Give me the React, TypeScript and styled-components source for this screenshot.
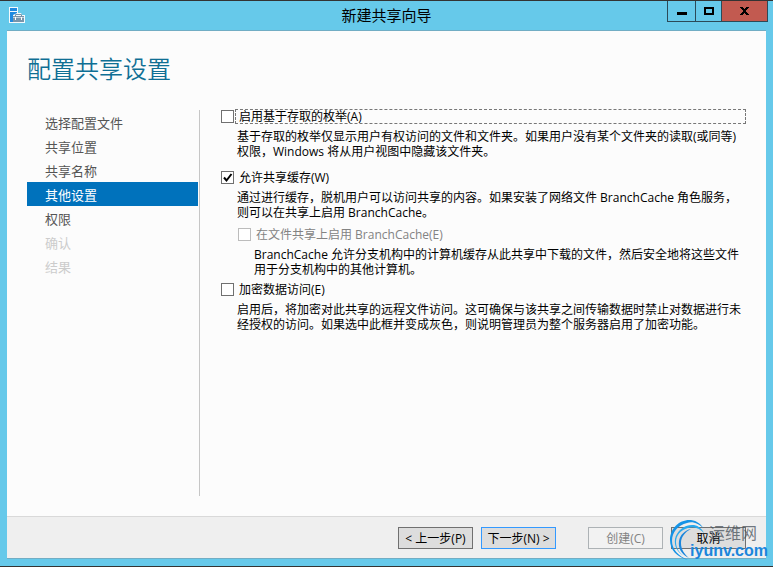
import React from "react";
import styled, { createGlobalStyle, css } from "styled-components";

const GlobalStyle = createGlobalStyle`
  * { box-sizing: border-box; }
  body { margin: 0; }
  body, button, input {
    font-family: "Open Sans", "Noto Sans CJK SC", sans-serif;
    font-size: 12px;
    color: #000;
  }
`;

const Window = styled.div`
  position: relative;
  display: flex;
  flex-direction: column;
  min-height: 100vh;
  padding: 0 7px 7px;
  background: #66c9ea;
  border-top: 1px solid #333;
  border-bottom: 1px solid #333;
`;

const TitleBar = styled.header`
  display: grid;
  grid-template-columns: 1fr auto 1fr;
  height: 29px;
`;

const AppIcon = styled.svg`
  width: 16px;
  height: 16px;
  margin: 6px 2px;
`;

const Title = styled.h1`
  margin: 0;
  font-size: 15px;
  font-weight: 400;
  line-height: 28px;
`;

const Captions = styled.div`
  display: flex;
  justify-content: flex-end;
  align-items: flex-start;
  margin-right: -2px;
`;

const CaptionButton = styled.button<{ $width: number; $close?: boolean }>`
  display: flex;
  align-items: center;
  justify-content: center;
  width: ${(p) => p.$width}px;
  height: 21px;
  padding: 0;
  border: 1px solid #2b4a58;
  border-top: 0;
  margin-left: -1px;
  background: ${(p) => (p.$close ? "#c25a50" : "transparent")};
`;

const Client = styled.div`
  flex: 1;
  display: flex;
  flex-direction: column;
  background: #fcfcfc;
  border-top: 1px solid #71adc4;
  border-bottom: 1px solid #71adc4;
`;

const Heading = styled.h2`
  margin: 22px 20px 0;
  color: #0f6f94;
  font-size: 24px;
  font-weight: 350;
  line-height: 32px;
`;

const Body = styled.div`
  flex: 1;
  display: flex;
  margin: 25px 20px 20px;
`;

const Steps = styled.nav`
  flex: 0 0 173px;
  padding-right: 1px;
  border-right: 1px solid #c6c6c6;
`;

const StepList = styled.ol`
  list-style: none;
  margin: 0;
  padding: 0;
`;

type StepState = "open" | "current" | "locked";

const stepColors = {
  open: css`color: #555;`,
  current: css`color: #fff; background: #0072bc;`,
  locked: css`color: #ccc;`,
};

const Step = styled.li<{ $state: StepState }>`
  height: 24px;
  padding-left: 18px;
  font-size: 13px;
  line-height: 27px;
  ${(p) => stepColors[p.$state]}
`;

const Options = styled.main`
  flex: 1;
  margin-top: -1px;
  padding-left: 21px;
`;

const Option = styled.section<{ $nested?: boolean; $gap: number }>`
  margin-left: ${(p) => (p.$nested ? 17 : 0)}px;
  margin-bottom: ${(p) => p.$gap}px;
`;

const OptionLabel = styled.label<{ $disabled?: boolean }>`
  display: flex;
  align-items: center;
  height: 15px;
  color: ${(p) => (p.$disabled ? "#838383" : "#000")};
`;

const Box = styled.span`
  display: grid;
  width: 13px;
  height: 13px;
  & > * { grid-area: 1 / 1; }
`;

const Check = styled.input`
  appearance: none;
  width: 13px;
  height: 13px;
  margin: 0;
  background: #fff;
  border: 1px solid #707070;
  &:disabled { border-color: #bcbcbc; }
`;

const LabelText = styled.span<{ $focused?: boolean }>`
  flex: 1;
  height: 15px;
  margin-left: 1px;
  padding-left: 3px;
  border: 1px dashed ${(p) => (p.$focused ? "#777" : "transparent")};
  line-height: 13px;
`;

const Description = styled.p`
  margin: 5px 0 0 16px;
  line-height: 15px;
`;

const Footer = styled.footer`
  display: flex;
  justify-content: flex-end;
  gap: 8px;
  padding: 10px 20px 9px;
  background: #efefef;
  border-top: 1px solid #d9d9d9;
`;

const Action = styled.button<{ $primary?: boolean; $apart?: boolean }>`
  width: 75px;
  height: 22px;
  padding: 2px 0 0;
  margin-left: ${(p) => (p.$apart ? 24 : 0)}px;
  background: #ddd;
  border: 1px solid ${(p) => (p.$primary ? "#3399ff" : "#707070")};
  line-height: 18px;
  white-space: nowrap;
  &:disabled {
    color: #838383;
    background: #f2f2f2;
    border-color: #adb2b5;
  }
`;

const Watermark = styled.div`
  position: absolute;
  right: 5px;
  bottom: 5px;
  display: flex;
  pointer-events: none;
`;

const Swirl = styled.svg`
  width: 42px;
  height: 42px;
  margin-right: -20px;
`;

const Brand = styled.div`
  display: flex;
  flex-direction: column;
  padding-top: 6px;
`;

const BrandName = styled.span`
  padding-left: 19px;
  color: rgba(70, 80, 90, 0.75);
  font-size: 16px;
  line-height: 17px;
`;

const BrandSite = styled.span`
  color: #1b86dc;
  font-family: "Liberation Sans", sans-serif;
  font-size: 16px;
  font-weight: 700;
  line-height: 17px;
`;

const steps: { name: string; state: StepState }[] = [
  { name: "选择配置文件", state: "open" },
  { name: "共享位置", state: "open" },
  { name: "共享名称", state: "open" },
  { name: "其他设置", state: "current" },
  { name: "权限", state: "open" },
  { name: "确认", state: "locked" },
  { name: "结果", state: "locked" },
];

const options = [
  {
    id: "enumeration",
    label: "启用基于存取的枚举(A)",
    text: "基于存取的枚举仅显示用户有权访问的文件和文件夹。如果用户没有某个文件夹的读取(或同等)权限，Windows 将从用户视图中隐藏该文件夹。",
    focused: true,
    gap: 11,
  },
  {
    id: "caching",
    label: "允许共享缓存(W)",
    text: "通过进行缓存，脱机用户可以访问共享的内容。如果安装了网络文件 BranchCache 角色服务，则可以在共享上启用 BranchCache。",
    checked: true,
    gap: 7,
  },
  {
    id: "branch",
    label: "在文件共享上启用 BranchCache(E)",
    text: "BranchCache 允许分支机构中的计算机缓存从此共享中下载的文件，然后安全地将这些文件用于分支机构中的其他计算机。",
    disabled: true,
    nested: true,
    gap: 5,
  },
  {
    id: "encrypt",
    label: "加密数据访问(E)",
    text: "启用后，将加密对此共享的远程文件访问。这可确保与该共享之间传输数据时禁止对数据进行未经授权的访问。如果选中此框并变成灰色，则说明管理员为整个服务器启用了加密功能。",
    gap: 0,
  },
];

export default function App() {
  const [checked, setChecked] = React.useState<Record<string, boolean>>({ caching: true });
  return (
    <>
      <GlobalStyle />
      <Window>
        <TitleBar>
          <AppIcon viewBox="0 0 16 16" aria-hidden="true">
            <path d="M0 0h9v6h3l1 2h3v8H0z" fill="#f4fafd" />
            <path d="M1 1h7v3H1zM1 5h7v1L4 8v7H1z" fill="#1f8ae0" />
            <path d="M4 9h11v6H4z" fill="#7895ab" />
            <path d="M6.500 9V7.500h6V9" fill="none" stroke="#7895ab" />
            <path d="M4 10.500h11" stroke="#c4d2dc" />
            <path d="M6 10h1v3H6zM12 10h1v3h-1z" fill="#fff" />
          </AppIcon>
          <Title>新建共享向导</Title>
          <Captions>
            <CaptionButton $width={29} aria-label="最小化">
              <svg width="10" height="12"><path d="M0 7h10v3H0z" /></svg>
            </CaptionButton>
            <CaptionButton $width={27} aria-label="最大化">
              <svg width="10" height="8"><path d="M1 1h8v6H1z" fill="none" stroke="#000" strokeWidth="2" /></svg>
            </CaptionButton>
            <CaptionButton $width={47} $close aria-label="关闭">
              <svg width="9" height="8" shapeRendering="crispEdges"><path d="M0 0h3v1h1v1h1V1h1V0h3v1H8v1H7v1H6v2h1v1h1v1h1v1H6V7H5V6H4v1H3v1H0V7h1V6h1V5h1V3H2V2H1V1H0z" /></svg>
            </CaptionButton>
          </Captions>
        </TitleBar>
        <Client>
          <Heading>配置共享设置</Heading>
          <Body>
            <Steps>
              <StepList>
                {steps.map((s) => (
                  <Step key={s.name} $state={s.state} aria-current={s.state === "current" ? "step" : undefined}>
                    {s.name}
                  </Step>
                ))}
              </StepList>
            </Steps>
            <Options>
              {options.map((o) => (
                <Option key={o.id} $nested={o.nested} $gap={o.gap}>
                  <OptionLabel htmlFor={o.id} $disabled={o.disabled}>
                    <Box>
                      <Check
                        id={o.id}
                        type="checkbox"
                        disabled={o.disabled}
                        checked={!!checked[o.id]}
                        onChange={(e) => setChecked({ ...checked, [o.id]: e.target.checked })}
                      />
                      {checked[o.id] && (
                        <svg width="13" height="13" pointerEvents="none" aria-hidden="true">
                          <path d="M3 6.500 5.500 9.500 10.500 3" fill="none" stroke="#000" strokeWidth="2" />
                        </svg>
                      )}
                    </Box>
                    <LabelText $focused={o.focused}>{o.label}</LabelText>
                  </OptionLabel>
                  <Description>{o.text}</Description>
                </Option>
              ))}
            </Options>
          </Body>
          <Footer>
            <Action>&lt; 上一步(P)</Action>
            <Action $primary>下一步(N) &gt;</Action>
            <Action $apart disabled>创建(C)</Action>
            <Action>取消</Action>
          </Footer>
        </Client>
        <Watermark>
          <Swirl viewBox="0 0 42 42" aria-hidden="true">
            <path d="M20 41C9 38 2 31 2 21 2 9 12 0 23 1c6 1 10 4 12 8C31 5 25 2 19 4 10 6 4 13 4 22c0 8 6 15 16 19z" fill="#1593e6" />
            <path d="M17 38C9 33 6 27 7 20 9 11 17 5 26 6c5 1 8 4 10 8-5-5-10-7-16-5C12 11 8 17 8 23c0 6 3 11 9 15z" fill="#27a9ee" />
            <path d="M21 39C13 35 10 29 11 22c1-6 6-11 12-12C17 13 13 18 13 24c0 6 3 11 8 15z" fill="#1b86dc" />
          </Swirl>
          <Brand>
            <BrandName>运维网</BrandName>
            <BrandSite>iyunv.com</BrandSite>
          </Brand>
        </Watermark>
      </Window>
    </>
  );
}
